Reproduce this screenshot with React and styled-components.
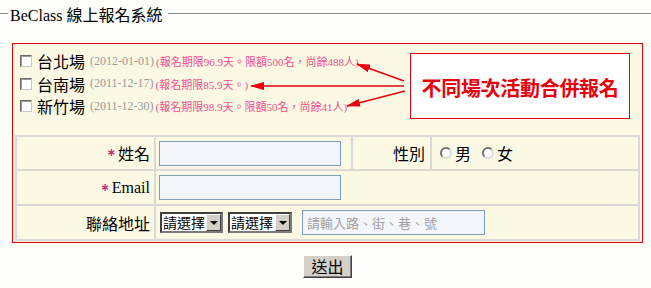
import React from 'react';
import styled, { createGlobalStyle } from 'styled-components';

const GlobalStyle = createGlobalStyle`
  html, body {
    margin: 0;
    padding: 0;
    background: #fdfdfa;
  }
  body {
    font-family: "Liberation Serif", "Noto Sans CJK TC", serif;
    color: #000;
    width: 651px;
    height: 288px;
    overflow: hidden;
  }
`;

const RED = '#e8000c';
const CREAM = '#fbf8e4';
const CJK = '"Noto Sans CJK TC", sans-serif';

const Page = styled.div`
  width: 651px;
`;

const Legend = styled.div`
  display: flex;
  align-items: center;
  height: 27px;
  margin-bottom: 2px;
`;

const LegendLine = styled.div`
  height: 1px;
  background: #8a8a8a;
  flex: ${(p) => (p.$grow ? '1' : '0 0 8px')};
`;

const LegendText = styled.span`
  font-size: 16px;
  line-height: 20px;
  margin: 4px 6px 0 2px;
  white-space: nowrap;
`;

const Frame = styled.div`
  margin: 16px 8px 0 12px;
  border: 1px solid ${RED};
  background: ${CREAM};
`;

const Top = styled.div`
  position: relative;
  height: 91px;
  box-sizing: border-box;
  padding: 0 12px 0 7px;
  display: flex;
  justify-content: space-between;
  align-items: flex-start;
`;

const Sessions = styled.div`
  padding-top: 6px;
  display: flex;
  flex-direction: column;
`;

const SessionRow = styled.label`
  height: 22.5px;
  display: flex;
  align-items: center;
  white-space: nowrap;
`;

const Check = styled.span`
  flex: none;
  width: 12px;
  height: 12px;
  box-sizing: border-box;
  border: 1px solid;
  border-color: #6a6a6a #c8c8c8 #c8c8c8 #6a6a6a;
  box-shadow: inset 1px 1px 0 #9a9a9a;
  background: #fff;
`;

const SessionName = styled.span`
  font-family: ${CJK};
  font-size: 16px;
  line-height: 20px;
  margin-left: 5px;
`;

const SessionDate = styled.span`
  font-size: 12px;
  color: #9a9a9a;
  margin-left: 5px;
`;

const Quota = styled.span`
  font-size: 11px;
  color: #f0508c;
  margin-left: 2px;
`;

const Callout = styled.div`
  margin-top: 9px;
  width: 220px;
  height: 66px;
  box-sizing: border-box;
  padding-top: 3px;
  border: 1px solid ${RED};
  background: #fefefe;
  display: flex;
  align-items: center;
  justify-content: center;
  color: ${RED};
  font-family: ${CJK};
  font-size: 20px;
  font-weight: bold;
  letter-spacing: -0.3px;
  white-space: nowrap;
`;

const Arrows = styled.svg`
  position: absolute;
  left: 0;
  top: 0;
  pointer-events: none;
`;

const Grid = styled.div`
  margin: 0 2px 1px;
  padding: 2px;
  display: grid;
  grid-template-columns: 137px 195px 77px 1fr;
  grid-template-rows: 32px 33px 33px;
  gap: 2px;
  background: #dbd9d5;
`;

const Cell = styled.div`
  background: ${CREAM};
  display: flex;
  align-items: center;
  justify-content: ${(p) => (p.$label ? 'flex-end' : 'flex-start')};
  padding: ${(p) => (p.$label ? `0 ${p.$pad || 4}px 0 0` : `0 0 0 ${p.$pad || 3}px`)};
  grid-column: ${(p) => (p.$span ? '2 / 5' : 'auto')};
  font-family: ${CJK};
  font-size: 16px;
  line-height: 20px;
  white-space: nowrap;
`;

const Star = styled.span`
  color: #c8307a;
  font-family: "DejaVu Sans", sans-serif;
  font-size: 11px;
  font-weight: bold;
  margin-right: 2px;
`;

const LatinLabel = styled.span`
  font-family: "Liberation Serif", serif;
  font-size: 16px;
`;

const TextBox = styled.input`
  width: ${(p) => p.$w}px;
  height: 25px;
  box-sizing: border-box;
  margin-left: ${(p) => p.$ml || 0}px;
  border: 1px solid #7f9db9;
  background: #f3f7fb;
  padding: 0 4px;
  font-family: ${CJK};
  font-size: 13px;
  outline: none;
  &::placeholder {
    color: #a0a0a0;
  }
`;

const Radio = styled.span`
  flex: none;
  width: 12px;
  height: 12px;
  box-sizing: border-box;
  border-radius: 50%;
  border: 2px solid;
  border-color: #707070 #dcdcdc #dcdcdc #707070;
  background: #fff;
  margin-left: ${(p) => p.$ml || 0}px;
`;

const RadioText = styled.span`
  margin-left: 3px;
`;

const Select = styled.span`
  display: inline-flex;
  align-items: center;
  justify-content: space-between;
  box-sizing: border-box;
  width: ${(p) => p.$w}px;
  height: 21px;
  margin-left: ${(p) => p.$ml || 0}px;
  border: 2px solid;
  border-color: #404040 #7a7a7a #7a7a7a #404040;
  background: #fff;
  padding-left: 1px;
  font-size: 14px;
  line-height: 17px;
`;

const SelectButton = styled.span`
  width: 15px;
  height: 17px;
  box-sizing: border-box;
  background: #d4d0c8;
  border: 1px solid;
  border-color: #fff #404040 #404040 #fff;
  display: flex;
  align-items: center;
  justify-content: center;

  &::after {
    content: '';
    border-left: 4px solid transparent;
    border-right: 4px solid transparent;
    border-top: 4px solid #000;
  }
`;

const Actions = styled.div`
  margin: 12px 8px 0 12px;
  display: flex;
  justify-content: center;
`;

const Submit = styled.button`
  width: 49px;
  height: 23px;
  padding: 0 0 2px;
  background: #d4d0c8;
  border: 1px solid;
  border-color: #fff #404040 #404040 #fff;
  box-shadow: inset -1px -1px 0 #808080;
  display: flex;
  align-items: center;
  justify-content: center;
  font-family: ${CJK};
  font-size: 16px;
  line-height: 18px;
  color: #000;
`;

const sessions = [
  { name: '台北場', date: '(2012-01-01)', quota: '(報名期限96.9天。限額500名，尚餘488人)' },
  { name: '台南場', date: '(2011-12-17)', quota: '(報名期限85.9天。)' },
  { name: '新竹場', date: '(2011-12-30)', quota: '(報名期限98.9天。限額50名，尚餘41人)' },
];

const arrows = [
  { x1: 391, y1: 37, x2: 344, y2: 20 },
  { x1: 391, y1: 42, x2: 238, y2: 42 },
  { x1: 392, y1: 47, x2: 334, y2: 62 },
];

const App = () => {
  return (
    <Page>
      <GlobalStyle />
      <Legend>
        <LegendLine />
        <LegendText>BeClass 線上報名系統</LegendText>
        <LegendLine $grow />
      </Legend>

      <Frame>
        <Top>
          <Sessions>
            {sessions.map((s) => (
              <SessionRow key={s.name}>
                <Check />
                <SessionName>{s.name}</SessionName>
                <SessionDate>{s.date}</SessionDate>
                <Quota>{s.quota}</Quota>
              </SessionRow>
            ))}
          </Sessions>
          <Callout>不同場次活動合併報名</Callout>
          <Arrows width="629" height="91" viewBox="0 0 629 91">
            <defs>
              <marker id="head" markerUnits="userSpaceOnUse" markerWidth="14" markerHeight="8" refX="13" refY="4" orient="auto">
                <path d="M0,0 L14,4 L0,8 Z" fill={RED} />
              </marker>
            </defs>
            {arrows.map((a, i) => (
              <line key={i} {...a} stroke={RED} strokeWidth="1.4" markerEnd="url(#head)" />
            ))}
          </Arrows>
        </Top>

        <Grid>
          <Cell $label><Star>∗</Star>姓名</Cell>
          <Cell><TextBox $w={182} /></Cell>
          <Cell $label $pad={5}>性別</Cell>
          <Cell $pad={8}>
            <Radio />
            <RadioText>男</RadioText>
            <Radio $ml={11} />
            <RadioText>女</RadioText>
          </Cell>

          <Cell $label><Star>∗</Star><LatinLabel>Email</LatinLabel></Cell>
          <Cell $span><TextBox $w={182} /></Cell>

          <Cell $label>聯絡地址</Cell>
          <Cell $span>
            <Select $w={63} $ml={1}>請選擇<SelectButton /></Select>
            <Select $w={64} $ml={5}>請選擇<SelectButton /></Select>
            <TextBox $w={183} $ml={10} placeholder="請輸入路、街、巷、號" />
          </Cell>
        </Grid>
      </Frame>

      <Actions>
        <Submit>送出</Submit>
      </Actions>
    </Page>
  );
};

export default App;
